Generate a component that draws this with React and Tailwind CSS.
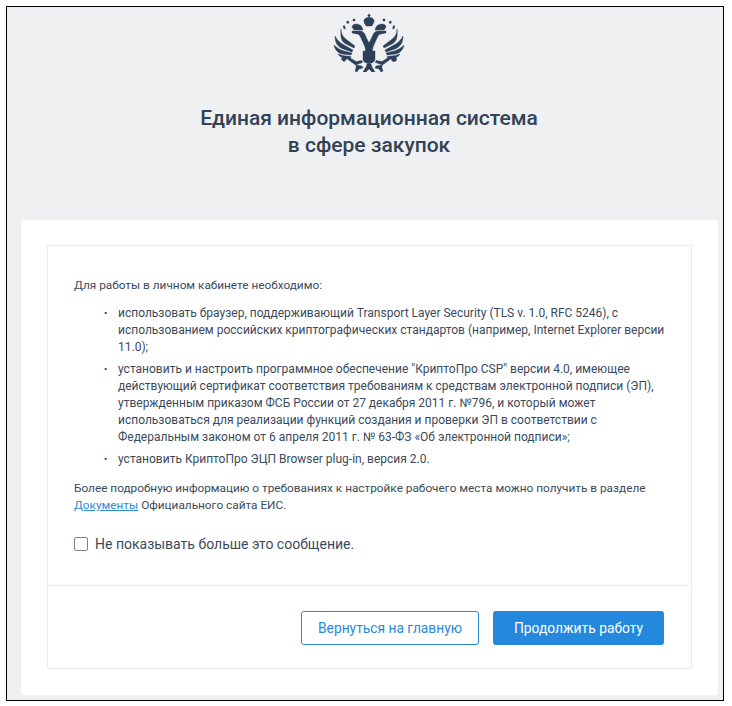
const font = "font-['Roboto','Liberation_Sans',sans-serif]";

function Emblem() {
  return (
    <svg viewBox="0 0 72 58" className="w-[72px] h-[58px] text-[#2c4059]" fill="currentColor" stroke="currentColor" strokeWidth=".4">
      {/* crowns */}
      <circle cx="36" cy="1.500" r="1.200" />
      <path d="M32 10c-2-3-1-5 1-6l3-1 3 1c2 1 3 3 1 6l-1 2h-6z" />
      <path d="M19 13c0-2 2-3 4-3s5 1 6 3l1 3h-9z" />
      <path d="M53 13c0-2-2-3-4-3s-5 1-6 3l-1 3h9z" />
      <path d="M20 5h2v2h-2zM50 5h2v2h-2zM14 7l2 .5-.5 2-2-.5zM58 7l-2 .5.5 2 2-.5z" />
      <path d="M10 12l1.500-.5 1 3-1.500.5zM62 12l-1.500-.5-1 3 1.500.5z" />
      {/* heads and necks */}
      <path d="M19 17h9c3 1 4 3 5 6l3 6 3-6c1-3 2-5 5-6h9v2l-5 1c-2 0-3 2-4 4l-4 9-1 6h-6l-1-6-4-9c-1-2-2-4-4-4l-5-1z" />
      {/* left wing */}
      <path d="M8 15c0 5 2 8 6 11l8 6-1 2-8-4c-4-2-6-6-5-15z" />
      <path d="M2 22c2 4 5 7 9 9l9 5-1 2-9-3c-5-2-8-6-8-13z" />
      <path d="M1 31c3 3 6 5 10 6l8 2-1 2-9-1c-4-1-7-4-8-9z" />
      <path d="M5 40c3 1 6 2 9 2l4 .5-1 2-6-.5c-3-.5-5-2-6-4z" />
      {/* right wing */}
      <path d="M64 15c0 5-2 8-6 11l-8 6 1 2 8-4c4-2 6-6 5-15z" />
      <path d="M70 22c-2 4-5 7-9 9l-9 5 1 2 9-3c5-2 8-6 8-13z" />
      <path d="M71 31c-3 3-6 5-10 6l-8 2 1 2 9-1c4-1 7-4 8-9z" />
      <path d="M67 40c-3 1-6 2-9 2l-4 .5 1 2 6-.5c3-.5 5-2 6-4z" />
      {/* shield */}
      <path d="M30 37h12v8c0 3-3 4-6 5-3-1-6-2-6-5z" />
      {/* sceptre, orb, legs */}
      <path d="M13 44l2-1.500 8 5 6-1 .5 2-7 2.500z" />
      <path d="M59 44l-2-1.500-8 5-6-1-.5 2 7 2.500z" />
      <rect x="9" y="43" width="4" height="4" transform="rotate(45 11 45)" />
      <circle cx="61" cy="45" r="2.600" />
      {/* tail */}
      <path d="M34 50h4l1 3 3 5h-3l-3-3-3 3h-3l3-5z" />
      <path d="M23 51l6 1 1 2-4 1-2 3-2-1 1-3zM49 51l-6 1-1 2 4 1 2 3 2-1-1-3z" />
    </svg>
  );
}

export default function App() {
  return (
    <div className={`${font} bg-white h-[706px] pt-[6px] pl-[6px] pr-[8px] pb-[5px] text-[#3a4a5c]`}>
      <div className="h-full border border-black bg-[#eef0f2] flex flex-col">
        <header className="h-[213px] shrink-0 flex flex-col items-center pt-[7px] pl-[8px]">
          <Emblem />
          <h1 className="mt-[33px] text-[21px] leading-[27px] font-medium text-center text-[#334256]">
            Единая информационная система
            <br />
            в сфере закупок
          </h1>
        </header>

        <main className="ml-[14px] mr-[5px] mb-[5px] flex-1 bg-white rounded-[3px] pt-[25px] px-[26px] pb-[26px]">
          <div className="h-full border border-[#e8ebf3] flex flex-col">
            <div className="h-[339px] shrink-0 pt-[31px] px-[26px] text-[11.8px] leading-[17px]">
              <p>Для работы в личном кабинете необходимо:</p>
              <ul className="mt-[11px] flex flex-col gap-[5px] text-[12px] -mr-[6px]">
                <li className="relative pl-[44px]">
                  <span className="absolute left-[30px] text-[10px]">•</span>
                  использовать браузер, поддерживающий Transport Layer Security (TLS v. 1.0, RFC 5246), с использованием российских криптографических стандартов (например, Internet Explorer версии 11.0);
                </li>
                <li className="relative pl-[44px]">
                  <span className="absolute left-[30px] text-[10px]">•</span>
                  установить и настроить программное обеспечение "КриптоПро CSP" версии 4.0, имеющее действующий сертификат соответствия требованиям к средствам электронной подписи (ЭП), утвержденным приказом ФСБ России от 27 декабря 2011 г. №796, и который может использоваться для реализации функций создания и проверки ЭП в соответствии с Федеральным законом от 6 апреля 2011 г. № 63-ФЗ «Об электронной подписи»;
                </li>
                <li className="relative pl-[44px]">
                  <span className="absolute left-[30px] text-[10px]">•</span>
                  установить КриптоПро ЭЦП Browser plug-in, версия 2.0.
                </li>
              </ul>
              <p className="mt-[12px]">
                Более подробную информацию о требованиях к настройке рабочего места можно получить в разделе{" "}
                <a href="#" className="text-[#2b8ad8] underline">Документы</a> Официального сайта ЕИС.
              </p>
              <label className="mt-[20px] flex items-center gap-[7px] text-[14px] leading-[20px]">
                <span className="w-[14px] h-[14px] border border-[#7a838e] rounded-[2px] bg-white" />
                Не показывать больше это сообщение.
              </label>
            </div>
            <div className="flex-1 border-t border-[#e8ebf3] flex justify-end items-start pt-[25px] pr-[27px] gap-[14px]">
              <button className="w-[178px] h-[34px] border border-[#2b8ad8] rounded-[3px] text-[13.8px] text-[#2b8ad8] bg-white">
                Вернуться на главную
              </button>
              <button className="w-[171px] h-[34px] rounded-[3px] text-[13.8px] text-white bg-[#2488dc]">
                Продолжить работу
              </button>
            </div>
          </div>
        </main>
      </div>
    </div>
  );
}
